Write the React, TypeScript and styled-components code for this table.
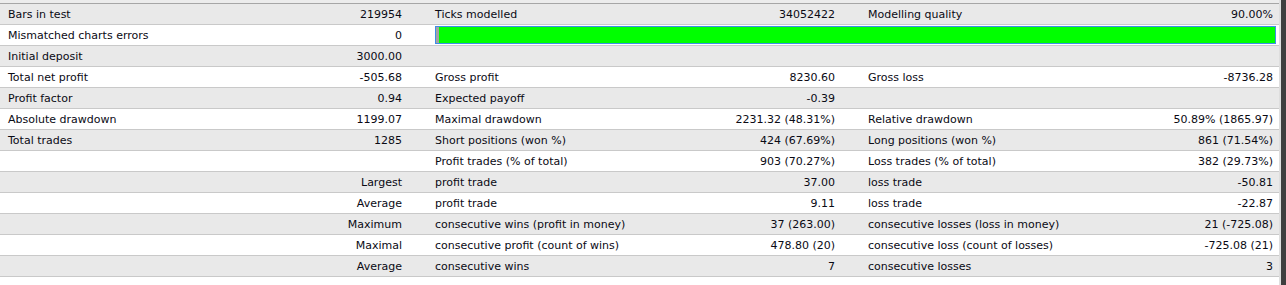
import React from "react";
import styled, { createGlobalStyle } from "styled-components";

const Global = createGlobalStyle`
  html, body { margin: 0; padding: 0; background: #ffffff; }
  body { font-family: "DejaVu Sans", Tahoma, sans-serif; }
`;

const Page = styled.div`
  display: flex;
  width: 1286px;
  height: 285px;
  overflow: hidden;
  background: #ffffff;
`;

const Report = styled.div`
  flex: 1;
  display: flex;
  flex-direction: column;
`;

const TopStrip = styled.div`
  height: 3px;
  background: #ececec;
  border-bottom: 1px solid #a6a6a6;
`;

const Edge = styled.div`
  display: flex;
  width: 7px;
`;

const EdgeLight = styled.div`
  width: 2px;
  background: #dedede;
`;

const EdgeDark = styled.div`
  flex: 1;
  background: #3e3e3e;
`;

const Row = styled.div<{ $shade: boolean }>`
  display: grid;
  grid-template-columns: 200px 210px 200px 233px 200px 236px;
  grid-template-rows: 20px;
  height: 20px;
  border-bottom: 1px solid #c9c9c9;
  background: ${(p) => (p.$shade ? "#e9e9e9" : "#ffffff")};
  font-size: 11px;
  color: #0a0a14;
  white-space: nowrap;
`;

const Label = styled.div<{ $first?: boolean }>`
  padding-left: ${(p) => (p.$first ? "8px" : "25px")};
  line-height: 22px;
  height: 20px;
`;

const Value = styled.div<{ $last?: boolean }>`
  text-align: right;
  padding-right: ${(p) => (p.$last ? "6px" : "8px")};
  line-height: 22px;
  height: 20px;
`;

const BarCell = styled.div`
  grid-column: 3 / 7;
  padding: 1px 3px 1px 25px;
  display: flex;
`;

const Bar = styled.div`
  flex: 1;
  height: 16px;
  border: 1px solid #3d8ee8;
  display: flex;
  background: #ffffff;
`;

const BarStub = styled.div`
  width: 3px;
  background: #a3a3a3;
`;

const BarFill = styled.div`
  flex: 1;
  background: #00ff00;
`;

type R = [string, string, string, string, string, string];

const rows: (R | "bar")[] = [
  ["Bars in test", "219954", "Ticks modelled", "34052422", "Modelling quality", "90.00%"],
  "bar",
  ["Initial deposit", "3000.00", "", "", "", ""],
  ["Total net profit", "-505.68", "Gross profit", "8230.60", "Gross loss", "-8736.28"],
  ["Profit factor", "0.94", "Expected payoff", "-0.39", "", ""],
  ["Absolute drawdown", "1199.07", "Maximal drawdown", "2231.32 (48.31%)", "Relative drawdown", "50.89% (1865.97)"],
  ["Total trades", "1285", "Short positions (won %)", "424 (67.69%)", "Long positions (won %)", "861 (71.54%)"],
  ["", "", "Profit trades (% of total)", "903 (70.27%)", "Loss trades (% of total)", "382 (29.73%)"],
  ["", "Largest", "profit trade", "37.00", "loss trade", "-50.81"],
  ["", "Average", "profit trade", "9.11", "loss trade", "-22.87"],
  ["", "Maximum", "consecutive wins (profit in money)", "37 (263.00)", "consecutive losses (loss in money)", "21 (-725.08)"],
  ["", "Maximal", "consecutive profit (count of wins)", "478.80 (20)", "consecutive loss (count of losses)", "-725.08 (21)"],
  ["", "Average", "consecutive wins", "7", "consecutive losses", "3"],
];

export default function App() {
  return (
    <>
      <Global />
      <Page>
        <Report>
          <TopStrip />
          {rows.map((r, i) =>
            r === "bar" ? (
              <Row key={i} $shade={i % 2 === 0}>
                <Label $first>Mismatched charts errors</Label>
                <Value>0</Value>
                <BarCell>
                  <Bar>
                    <BarStub />
                    <BarFill />
                  </Bar>
                </BarCell>
              </Row>
            ) : (
              <Row key={i} $shade={i % 2 === 0}>
                <Label $first>{r[0]}</Label>
                <Value>{r[1]}</Value>
                <Label>{r[2]}</Label>
                <Value>{r[3]}</Value>
                <Label>{r[4]}</Label>
                <Value $last>{r[5]}</Value>
              </Row>
            )
          )}
        </Report>
        <Edge>
          <EdgeLight />
          <EdgeDark />
        </Edge>
      </Page>
    </>
  );
}
